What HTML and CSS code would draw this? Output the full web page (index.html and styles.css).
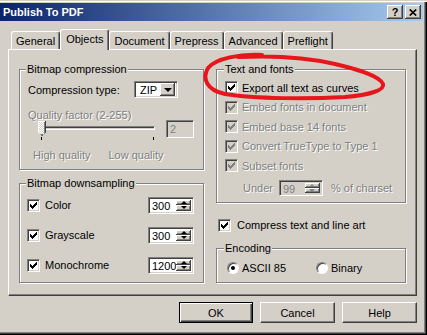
FILE: index.html
```
<!DOCTYPE html>
<html lang="en">
<head>
    <meta charset="UTF-8">
    <title>Publish To PDF</title>
    <link rel="stylesheet" href="styles.css">
</head>
<body>
    <!-- check mark used by every checkbox -->
    <svg class="defs" width="0" height="0">
        <symbol id="tick" viewBox="0 0 7 7">
            <path d="M0 2h1v1h1v1h1v-1h1v-1h1v-1h1v-1h1v3h-1v1h-1v1h-1v1h-1v1h-1v-1h-1v-1h-1z"/>
        </symbol>
    </svg>

    <div class="window">
        <div class="titlebar">
            <span class="title">Publish To PDF</span>
            <span class="cap-btn">?</span>
            <span class="cap-btn">
                <svg width="8" height="7" viewBox="0 0 8 7"><path d="M0.8 0.5 L7.2 6.5 M7.2 0.5 L0.8 6.5"/></svg>
            </span>
        </div>

        <div class="dialog">
            <div class="tabs">
                <span class="tab">General</span>
                <span class="tab active">Objects</span>
                <span class="tab">Document</span>
                <span class="tab">Prepress</span>
                <span class="tab">Advanced</span>
                <span class="tab">Preflight</span>
            </div>

            <div class="panel">
                <!-- left column -->
                <div class="col">
                    <fieldset class="group compression">
                        <legend>Bitmap compression</legend>
                        <div class="combo-row">
                            <span class="combo-label">Compression type:</span>
                            <span class="combo"><span class="combo-val">ZIP</span><span class="combo-btn"><i class="down"></i></span></span>
                        </div>
                        <div class="dim qlabel">Quality factor (2-255)</div>
                        <div class="slider-row">
                            <div class="slider">
                                <span class="track"></span>
                                <span class="thumb"></span>
                                <span class="tick-mark first"></span>
                                <span class="tick-mark last"></span>
                            </div>
                            <span class="field off">2</span>
                        </div>
                        <div class="dim scale">
                            <span>High quality</span>
                            <span>Low quality</span>
                        </div>
                    </fieldset>

                    <fieldset class="group downsampling">
                        <legend>Bitmap downsampling</legend>
                        <div class="ds-row">
                            <span class="cb"><svg class="tick"><use href="#tick"/></svg></span>
                            <span class="cb-text">Color</span>
                            <span class="spin"><span class="spin-val">300</span><span class="arrows"><span class="arr"><i class="up"></i></span><span class="arr"><i class="down-s"></i></span></span></span>
                        </div>
                        <div class="ds-row">
                            <span class="cb"><svg class="tick"><use href="#tick"/></svg></span>
                            <span class="cb-text">Grayscale</span>
                            <span class="spin"><span class="spin-val">300</span><span class="arrows"><span class="arr"><i class="up"></i></span><span class="arr"><i class="down-s"></i></span></span></span>
                        </div>
                        <div class="ds-row">
                            <span class="cb"><svg class="tick"><use href="#tick"/></svg></span>
                            <span class="cb-text">Monochrome</span>
                            <span class="spin"><span class="spin-val">1200</span><span class="arrows"><span class="arr"><i class="up"></i></span><span class="arr"><i class="down-s"></i></span></span></span>
                        </div>
                    </fieldset>
                </div>

                <!-- right column -->
                <div class="col">
                    <fieldset class="group fonts">
                        <legend>Text and fonts</legend>
                        <div class="check-row">
                            <span class="cb"><svg class="tick"><use href="#tick"/></svg></span>
                            <span class="cb-text">Export all text as curves</span>
                        </div>
                        <div class="check-row">
                            <span class="cb off"><svg class="tick"><use href="#tick"/></svg></span>
                            <span class="cb-text dim">Embed fonts in document</span>
                        </div>
                        <div class="check-row">
                            <span class="cb off"><svg class="tick"><use href="#tick"/></svg></span>
                            <span class="cb-text dim">Embed base 14 fonts</span>
                        </div>
                        <div class="check-row">
                            <span class="cb off"><svg class="tick"><use href="#tick"/></svg></span>
                            <span class="cb-text dim">Convert TrueType to Type 1</span>
                        </div>
                        <div class="check-row">
                            <span class="cb off"><svg class="tick"><use href="#tick"/></svg></span>
                            <span class="cb-text dim">Subset fonts</span>
                        </div>
                        <div class="under-row dim">
                            <span>Under</span>
                            <span class="spin small off"><span class="spin-val">99</span><span class="arrows"><span class="arr"><i class="up"></i></span><span class="arr"><i class="down-s"></i></span></span></span>
                            <span class="charset">% of charset</span>
                        </div>
                    </fieldset>

                    <div class="compress-row">
                        <span class="cb"><svg class="tick"><use href="#tick"/></svg></span>
                        <span class="cb-text">Compress text and line art</span>
                    </div>

                    <fieldset class="group encoding">
                        <legend>Encoding</legend>
                        <div class="radio-row">
                            <span class="option"><span class="radio on"></span>ASCII 85</span>
                            <span class="option"><span class="radio"></span>Binary</span>
                        </div>
                    </fieldset>
                </div>
            </div>

            <div class="actions">
                <button class="btn default">OK</button>
                <button class="btn">Cancel</button>
                <button class="btn">Help</button>
            </div>
        </div>

        <!-- red marker drawn over the dialog -->
        <svg class="scribble" width="427" height="335" viewBox="0 0 427 335">
            <path d="M262 55 C240 54 216 58 208 68 C202 78 206 90 225 94 C255 99 310 99 345 97 C370 95 385 90 383 84 C380 76 360 70 335 64 C310 58 280 55 238 57"/>
        </svg>
    </div>
</body>
</html>
```
FILE: styles.css
```
/* General styling */
* {
    box-sizing: border-box;
}

body {
    margin: 0;
    width: 427px;
    height: 335px;
    overflow: hidden;
    background-color: #d4d0c8;
    font-family: "Liberation Sans", Arial, sans-serif;
    font-size: 11px;
    color: #000;
}

.defs {
    position: absolute;
}

.dim {
    color: #808080;
    text-shadow: 1px 1px 0 #fff;
}

/* Window frame */
.window {
    position: relative;
    height: 335px;
    padding: 3px 4px 0 0;
    box-shadow: inset 0 1px #d4d0c8, inset 0 2px #fff,
        inset -1px -1px #000, inset -2px -2px #404040, inset -3px -3px #808080;
}

.titlebar {
    height: 18px;
    display: flex;
    align-items: center;
    padding: 0 2px 0 3px;
    background: linear-gradient(to right, #0a246a, #a6caf0);
    color: #fff;
    font-weight: bold;
}

.title {
    flex: 1;
}

.cap-btn {
    width: 16px;
    height: 14px;
    margin-left: 2px;
    display: flex;
    align-items: center;
    justify-content: center;
    background: #d4d0c8;
    color: #000;
    font-size: 11px;
    box-shadow: inset -1px -1px #404040, inset 1px 1px #fff, inset -2px -2px #808080;
}

.cap-btn path {
    stroke: #000;
    stroke-width: 1.7;
}

.dialog {
    padding: 8px 6px 0 8px;
}

/* Tabs */
.tabs {
    display: flex;
    align-items: flex-end;
    height: 20px;
    padding-left: 3px;
}

.tab {
    height: 18px;
    padding: 1px 4px 0;
    line-height: 16px;
    border: 1px solid #fff;
    border-right-color: #404040;
    border-bottom: none;
    border-radius: 3px 3px 0 0;
    box-shadow: inset -1px 0 #808080;
}

.tab.active {
    position: relative;
    z-index: 1;
    height: 21px;
    margin-bottom: -1px;
    padding: 0 5px 2px;
    line-height: 18px;
    background: #d4d0c8;
}

.panel {
    height: 247px;
    display: grid;
    grid-template-columns: 185px 190px;
    column-gap: 12px;
    align-items: start;
    padding: 12px 10px 0;
    border: 1px solid #fff;
    border-right-color: #404040;
    border-bottom-color: #404040;
    box-shadow: inset -1px -1px #808080;
}

.col {
    display: flex;
    flex-direction: column;
}

/* Group boxes */
.group {
    margin: 0;
    min-width: 0;
    padding: 0;
    border: 1px solid #808080;
    box-shadow: 1px 1px 0 #fff, inset 1px 1px 0 #fff;
}

.group legend {
    padding: 0 1px;
    line-height: 14px;
    background: #d4d0c8;
}

.compression {
    padding: 5px 9px 7px 8px;
}

.compression legend {
    margin-left: -2px;
}

.downsampling {
    margin-top: 6px;
    padding: 5px 9px 7px 7px;
}

.downsampling legend {
    margin-left: -1px;
}

.fonts {
    padding: 2px 0 2.5px 8px;
}

.fonts legend {
    margin-left: -1px;
}

.encoding {
    margin-top: 6px;
    padding: 4px 0 5px 10px;
}

.encoding legend {
    margin-left: -3px;
}

/* Sunken fields */
.combo, .field, .spin {
    background: #fff;
    border: 1px solid;
    border-color: #808080 #fff #fff #808080;
    box-shadow: inset 1px 1px #404040, inset -1px -1px #d4d0c8;
}

.field.off, .spin.off {
    background: #d4d0c8;
    color: #808080;
}

.combo-row {
    height: 17px;
    display: flex;
    align-items: center;
}

.combo-label {
    width: 106px;
}

.combo {
    width: 44px;
    height: 17px;
    display: flex;
    align-items: center;
    padding: 2px;
}

.combo-val {
    flex: 1;
    padding-left: 3px;
}

.combo-btn, .arr {
    display: flex;
    align-items: center;
    justify-content: center;
    background: #d4d0c8;
    box-shadow: inset -1px -1px #404040, inset 1px 1px #fff, inset -2px -2px #808080;
}

.combo-btn {
    width: 15px;
    height: 13px;
}

.down {
    border-left: 4px solid transparent;
    border-right: 4px solid transparent;
    border-top: 4px solid #000;
}

.qlabel {
    margin-top: 10px;
    line-height: 14px;
}

/* Slider */
.slider-row {
    height: 20px;
    margin-top: -2px;
    display: flex;
    justify-content: space-between;
}

.slider {
    position: relative;
    width: 130px;
    height: 20px;
}

.track {
    position: absolute;
    left: 12px;
    top: 6px;
    width: 115px;
    height: 4px;
    border: 1px solid;
    border-color: #808080 #fff #fff #808080;
    box-shadow: inset 1px 1px #404040;
}

.thumb {
    position: absolute;
    left: 10px;
    top: 1px;
    width: 8px;
    height: 15px;
    background: repeating-conic-gradient(#fff 0 25%, #d4d0c8 0 50%) 0 0 / 2px 2px;
    box-shadow: inset -1px -1px #404040, inset 1px 1px #fff, inset -2px -2px #808080;
    clip-path: polygon(0 0, 100% 0, 100% 75%, 50% 100%, 0 75%);
}

.tick-mark {
    position: absolute;
    top: 17px;
    width: 1px;
    height: 3px;
    background: #000;
}

.tick-mark.first {
    left: 13px;
}

.tick-mark.last {
    left: 125px;
}

.field {
    width: 28px;
    height: 18px;
    padding: 1px 3px;
    line-height: 14px;
}

.scale {
    margin-top: 8px;
    line-height: 14px;
    padding-left: 5px;
    display: flex;
    gap: 18px;
}

/* Checkboxes */
.cb {
    flex: none;
    width: 13px;
    height: 13px;
    display: flex;
    align-items: center;
    justify-content: center;
    background: #fff;
    color: #000;
    border: 1px solid;
    border-color: #808080 #fff #fff #808080;
    box-shadow: inset 1px 1px #404040, inset -1px -1px #d4d0c8;
}

.cb.off {
    background: #d4d0c8;
    color: #808080;
}

.tick {
    width: 7px;
    height: 7px;
    fill: currentColor;
}

.ds-row {
    height: 20px;
    display: flex;
    align-items: center;
}

.ds-row + .ds-row {
    margin-top: 10px;
}

.ds-row .cb-text {
    margin-left: 5px;
}

.ds-row .spin {
    margin-left: auto;
}

/* Spin boxes */
.spin {
    width: 46px;
    height: 17px;
    display: flex;
    padding: 2px;
}

.spin.small {
    width: 44px;
    height: 16px;
}

.spin-val {
    flex: 1;
    padding-left: 1px;
    line-height: 13px;
}

.arrows {
    width: 15px;
    display: flex;
    flex-direction: column;
}

.arr {
    flex: 1;
}

.up, .down-s {
    border-left: 3px solid transparent;
    border-right: 3px solid transparent;
}

.up {
    border-bottom: 3px solid #000;
}

.down-s {
    border-top: 3px solid #000;
}

.off .up {
    border-bottom-color: #808080;
}

.off .down-s {
    border-top-color: #808080;
}

/* Right column rows */
.check-row {
    height: 19.5px;
    display: flex;
    align-items: center;
}

.check-row .cb-text {
    margin-left: 4px;
}

.under-row {
    height: 24px;
    display: flex;
    align-items: center;
    padding-left: 18px;
}

.under-row .spin {
    margin-left: 6px;
    text-shadow: none;
}

.charset {
    margin-left: 8px;
}

.compress-row {
    height: 20px;
    margin-top: 12px;
    display: flex;
    align-items: center;
    padding-left: 2px;
}

.compress-row .cb-text {
    margin-left: 6px;
}

.radio-row {
    height: 18px;
    display: flex;
    align-items: center;
}

.option {
    width: 90px;
    display: flex;
    align-items: center;
}

.radio {
    width: 12px;
    height: 12px;
    margin-right: 3px;
    display: flex;
    align-items: center;
    justify-content: center;
    border-radius: 50%;
    background: #fff;
    border: 1px solid;
    border-color: #808080 #fff #fff #808080;
    box-shadow: inset 1px 1px #404040;
}

.radio.on::after {
    content: "";
    width: 4px;
    height: 4px;
    border-radius: 50%;
    background: #000;
}

/* Dialog buttons */
.actions {
    display: flex;
    justify-content: flex-end;
    gap: 7px;
    margin-top: 6px;
}

.btn {
    width: 75px;
    height: 21px;
    padding: 0;
    font: inherit;
    color: #000;
    background: #d4d0c8;
    border: 1px solid;
    border-color: #fff #404040 #404040 #fff;
    box-shadow: inset -1px -1px #808080;
}

.btn.default {
    width: 74px;
    border-color: #000;
    box-shadow: inset 1px 1px #fff, inset -1px -1px #404040, inset -2px -2px #808080;
}

/* Red marker */
.scribble {
    position: absolute;
    left: 0;
    top: 0;
    pointer-events: none;
}

.scribble path {
    fill: none;
    stroke: #e8161c;
    stroke-width: 4;
    stroke-linecap: round;
    stroke-linejoin: round;
}
```
